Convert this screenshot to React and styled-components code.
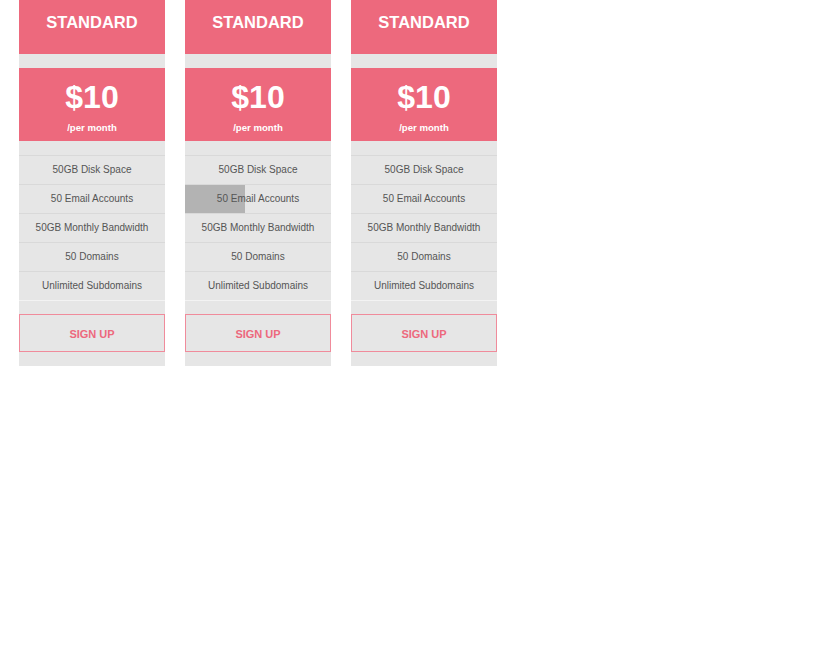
import React from 'react'
import styled, {createGlobalStyle} from 'styled-components'

const GlobalStyle = createGlobalStyle`
  body {
    margin: 0;
    background: #ffffff;
    font-family: "Liberation Sans", Arial, sans-serif;
  }
`

const PINK = '#ed697d'

const Board = styled.div`
  display: flex;
  align-items: flex-start;
  gap: 20px;
  padding-left: 19px;
`

const Card = styled.div`
  width: 146px;
  background: #e6e6e6;
  display: flex;
  flex-direction: column;
`

const Title = styled.div`
  height: 54px;
  background: ${PINK};
  color: #ffffff;
  font-size: 16.5px;
  font-weight: bold;
  display: flex;
  align-items: center;
  justify-content: center;
  padding-bottom: 9px;
  box-sizing: border-box;
`

const Price = styled.div`
  margin-top: 14px;
  height: 73px;
  background: ${PINK};
  color: #ffffff;
  display: flex;
  flex-direction: column;
  align-items: center;
  padding-top: 11px;
  box-sizing: border-box;
`

const Amount = styled.div`
  font-size: 32px;
  font-weight: bold;
  line-height: 36px;
`

const Period = styled.div`
  font-size: 9.6px;
  font-weight: bold;
  margin-top: 7px;
`

const Features = styled.ul`
  list-style: none;
  margin: 14px 0 0;
  padding: 0;
  border-bottom: 1px solid #f3f3f3;
`

const Feature = styled.li`
  position: relative;
  height: 29px;
  border-top: 1px solid #d9d9d9;
  box-sizing: border-box;
  display: flex;
  align-items: center;
  justify-content: center;
  padding-bottom: 2px;
  font-size: 10px;
  color: #555555;
`

const HoverFill = styled.span`
  position: absolute;
  left: 0;
  top: 0;
  bottom: 0;
  width: ${p => p.$width}px;
  background: #b3b3b3;
`

const Label = styled.span`
  position: relative;
`

const SignUp = styled.button`
  margin: 13px 0 14px;
  height: 38px;
  border: 1px solid #f08b9b;
  background: transparent;
  color: ${PINK};
  font-family: "Liberation Sans", Arial, sans-serif;
  font-size: 11px;
  font-weight: bold;
  padding-top: 2px;
  cursor: pointer;
`

const features = [
  '50GB Disk Space',
  '50 Email Accounts',
  '50GB Monthly Bandwidth',
  '50 Domains',
  'Unlimited Subdomains'
]

function PlanCard({hovered}) {
  return (
    <Card>
      <Title>STANDARD</Title>
      <Price>
        <Amount>$10</Amount>
        <Period>/per month</Period>
      </Price>
      <Features>
        {features.map((f, i) => (
          <Feature key={f}>
            {hovered === i && <HoverFill $width={60} />}
            <Label>{f}</Label>
          </Feature>
        ))}
      </Features>
      <SignUp>SIGN UP</SignUp>
    </Card>
  )
}

export default function App() {
  return (
    <>
      <GlobalStyle />
      <Board>
        <PlanCard />
        <PlanCard hovered={1} />
        <PlanCard />
      </Board>
    </>
  )
}
